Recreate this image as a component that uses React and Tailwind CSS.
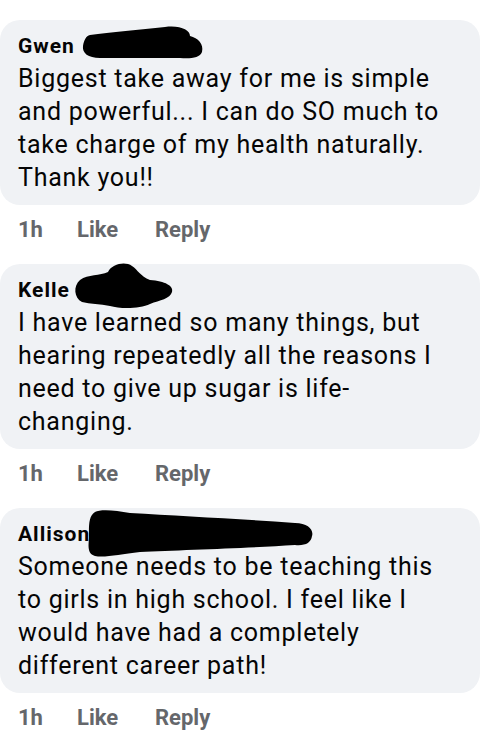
import React from "react";

const comments = [
  {
    name: "Gwen",
    text: "Biggest take away for me is simple and powerful... I can do SO much to take charge of my health naturally. Thank you!!",
    scribble:
      "M 90 15 C 110 12, 140 10, 165 7 C 180 5, 190 10, 190 16 C 198 18, 204 24, 202 32 C 200 38, 190 39, 180 38 L 100 38 C 88 38, 82 33, 83 26 C 84 20, 86 16, 90 15 Z",
  },
  {
    name: "Kelle",
    text: "I have learned so many things, but hearing repeatedly all the reasons I need to give up sugar is life-changing.",
    scribble:
      "M 80 16 C 88 10, 100 12, 108 8 C 112 0, 125 -3, 132 2 C 138 6, 140 12, 150 16 C 165 17, 174 22, 172 28 C 170 35, 160 36, 150 40 C 140 45, 120 45, 110 42 C 100 40, 90 40, 82 38 C 74 34, 73 22, 80 16 Z",
  },
  {
    name: "Allison",
    text: "Someone needs to be teaching this to girls in high school. I feel like I would have had a completely different career path!",
    scribble:
      "M 95 4 C 100 1, 115 2, 130 5 C 180 8, 240 11, 295 15 C 308 15, 314 22, 312 28 C 311 35, 305 38, 295 37 C 250 40, 180 42, 140 44 C 120 46, 105 50, 95 48 C 88 46, 88 40, 89 30 C 89 20, 88 8, 95 4 Z",
  },
];

function Comment({ c }) {
  return (
    <div className="mb-[20px]">
      <div className="relative w-[480px] rounded-[20px] bg-[#f0f2f5] pl-[18px] pr-[32px] pt-[14px] pb-[11px] text-[#050505]">
        <div className="text-[21px] font-bold leading-[24px] tracking-[1px]">{c.name}</div>
        <div className="mt-[4px] text-[25px] leading-[33px] tracking-[0.75px]">{c.text}</div>
        <svg
          className="pointer-events-none absolute left-0 top-0 overflow-visible"
          width="480"
          height="60"
          viewBox="0 0 480 60"
        >
          <path d={c.scribble} fill="#000" />
        </svg>
      </div>
      <div className="mt-[11px] flex pl-[18px] text-[22px] font-bold leading-[28px] text-[#65676b]">
        <span className="w-[59px]">1h</span>
        <span className="w-[78px]">Like</span>
        <span>Reply</span>
      </div>
    </div>
  );
}

export default function App() {
  return (
    <div
      className="min-h-[736px] w-[500px] bg-white pt-[20px]"
      style={{ fontFamily: "Roboto, 'Noto Sans', sans-serif" }}
    >
      {comments.map((c) => (
        <Comment key={c.name} c={c} />
      ))}
    </div>
  );
}
